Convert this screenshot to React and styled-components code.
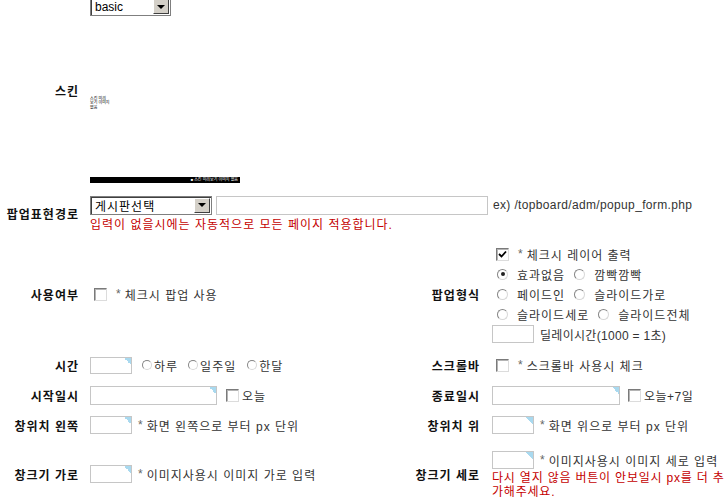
import React from 'react'
import styled, { createGlobalStyle } from 'styled-components'

const GlobalStyle = createGlobalStyle`
  body {
    margin: 0;
    background: #fff;
  }
  * {
    box-sizing: border-box;
  }
`

const Page = styled.div`
  width: 728px;
  margin-top: -3px;
  font-family: "Liberation Sans", "Noto Sans CJK KR", sans-serif;
  font-size: 12px;
  color: #333;
  overflow: hidden;
`

const Row = styled.div`
  display: grid;
  grid-template-columns: ${p => (p.$full ? '80px 1fr' : '80px 322px 80px 246px')};
  align-items: center;
  padding: ${p => p.$pad || '0'};
  min-height: ${p => (p.$h ? `${p.$h}px` : 'auto')};
`

const Label = styled.div`
  text-align: right;
  padding-right: ${p => p.$pr || 0}px;
  font-weight: bold;
  letter-spacing: 1px;
  color: #111;
  white-space: nowrap;
`

const Cell = styled.div`
  padding-left: 10px;
  display: flex;
  flex-direction: column;
  align-items: flex-start;
`

const Line = styled.div`
  display: flex;
  align-items: center;
  height: ${p => p.$h || 20}px;
  white-space: nowrap;
`

const Select = styled.div`
  display: flex;
  align-items: center;
  justify-content: space-between;
  width: ${p => p.$w}px;
  height: 19px;
  border: 1px solid #7f7f7f;
  box-shadow: inset 1px 1px 0 #404040;
  background: #fff;
  color: #000;
  padding-left: 4px;
  letter-spacing: ${p => p.$ls || 0}px;
`

const Arrow = styled.span`
  display: flex;
  align-items: center;
  justify-content: center;
  width: 16px;
  height: 15px;
  margin: 1px;
  background: #d4d0c8;
  border: 1px solid;
  border-color: #fff #404040 #404040 #fff;

  &::after {
    content: '';
    border-left: 4px solid transparent;
    border-right: 4px solid transparent;
    border-top: 4px solid #000;
  }
`

const Field = styled.input`
  width: ${p => p.$w}px;
  height: ${p => p.$h || 18}px;
  margin: 0 ${p => p.$mr ?? 6}px 0 0;
  border: 1px solid #c6c6c6;
  background: #fff linear-gradient(to bottom left, #a9d9ef 50%, transparent 50%) no-repeat top right / 7px 7px;
  padding: 0 2px;
  font: inherit;
  outline: none;
`

const PlainField = styled(Field)`
  background: #fff;
`

const Check = styled.span`
  display: inline-flex;
  align-items: center;
  justify-content: center;
  flex: none;
  width: 13px;
  height: 13px;
  margin: 0 ${p => p.$mr ?? 9}px 0 ${p => p.$ml ?? 4}px;
  border: 1px solid;
  border-color: #7a7a7a #dcdcdc #dcdcdc #7a7a7a;
  box-shadow: inset 1px 1px 0 #b4b4b4;
  background: #fff;
`

const Radio = styled.span`
  display: inline-flex;
  align-items: center;
  justify-content: center;
  flex: none;
  width: ${p => p.$size || 11}px;
  height: ${p => p.$size || 11}px;
  margin: 0 ${p => p.$mr ?? 9}px 0 ${p => p.$ml ?? 5}px;
  border-radius: 50%;
  border: 1px solid;
  border-color: #858585 #d8d8d8 #d8d8d8 #858585;
  background: #fff;

  &::after {
    content: '';
    display: ${p => (p.$on ? 'block' : 'none')};
    width: 4px;
    height: 4px;
    border-radius: 50%;
    background: #222;
  }
`

const Star = styled.span`
  color: #666;
  margin-right: 4px;
`

const Note = styled.span`
  color: #333;
  letter-spacing: ${p => p.$ls ?? 1}px;
`

const Red = styled.div`
  color: #c40000;
  margin-top: ${p => p.$mt || 0}px;
  line-height: ${p => p.$lh || 14}px;
  letter-spacing: ${p => p.$ls ?? 1}px;
  white-space: nowrap;
`

const Tiny = styled.div`
  margin-top: 81px;
  font-size: 4px;
  line-height: 4.4px;
  color: #000;
`

const Bar = styled.div`
  margin-top: 67px;
  width: 150px;
  height: 6px;
  background: #000;
  color: #fff;
  font-size: 4px;
  line-height: 6px;
  text-align: right;
  padding-right: 2px;
  white-space: nowrap;
`

const Gap = styled.span`
  display: inline-block;
  width: ${p => p.$w}px;
`

const Tick = () => (
  <svg width="9" height="9" viewBox="0 0 9 9">
    <path d="M1 4 L3.5 6.5 L8 1.5" fill="none" stroke="#000" strokeWidth="1.8" />
  </svg>
)

const RadioItem = ({ on, children, size, ml, mr, after = 4 }) => (
  <>
    <Radio $on={on} $size={size} $ml={ml} $mr={mr} />
    <Note>{children}</Note>
    <Gap $w={after} />
  </>
)

export default function App() {
  return (
    <Page>
      <GlobalStyle />

      <Row $full $pad="0 0 6px">
        <Label $pr={1}>스킨</Label>
        <Cell>
          <Select $w={81}>
            basic
            <Arrow />
          </Select>
          <Tiny>
            스킨 미리<br />
            보기 이미지<br />
            없음
          </Tiny>
          <Bar>■ 스킨 미리보기 이미지 없음</Bar>
        </Cell>
      </Row>

      <Row $full $pad="6px 0 5px">
        <Label $pr={1}>팝업표현경로</Label>
        <Cell>
          <Line $h={20}>
            <Select $w={122} $ls={1}>
              게시판선택
              <Arrow />
            </Select>
            <Gap $w={4} />
            <PlainField $w={272} $h={19} $mr={5} />
            <Note $ls={0.35}>ex) /topboard/adm/popup_form.php</Note>
          </Line>
          <Red $mt={3}>입력이 없을시에는 자동적으로 모든 페이지 적용합니다.</Red>
        </Cell>
      </Row>

      <Row $pad="7px 0 6px">
        <Label $pr={1}>사용여부</Label>
        <Cell>
          <Line>
            <Check />
            <Star>*</Star>
            <Note>체크시 팝업 사용</Note>
          </Line>
        </Cell>
        <Label $pr={2}>팝업형식</Label>
        <Cell>
          <Line>
            <Check>
              <Tick />
            </Check>
            <Star>*</Star>
            <Note>체크시 레이어 출력</Note>
          </Line>
          <Line>
            <RadioItem on>효과없음</RadioItem>
            <RadioItem>깜빡깜빡</RadioItem>
          </Line>
          <Line>
            <RadioItem>페이드인</RadioItem>
            <RadioItem>슬라이드가로</RadioItem>
          </Line>
          <Line>
            <RadioItem>슬라이드세로</RadioItem>
            <RadioItem>슬라이드전체</RadioItem>
          </Line>
          <Line>
            <PlainField $w={42} $h={18} />
            <Note $ls={0.3}>딜레이시간(1000 = 1초)</Note>
          </Line>
        </Cell>
      </Row>

      <Row $h={30}>
        <Label $pr={1}>시간</Label>
        <Cell>
          <Line>
            <Field $w={42} $h={17} $mr={0} />
            <RadioItem size={10} ml={10} mr={2} after={10}>하루</RadioItem>
            <RadioItem size={10} ml={0} mr={2} after={11}>일주일</RadioItem>
            <RadioItem size={10} ml={0} mr={2} after={0}>한달</RadioItem>
          </Line>
        </Cell>
        <Label $pr={2}>스크롤바</Label>
        <Cell>
          <Line>
            <Check />
            <Star>*</Star>
            <Note>스크롤바 사용시 체크</Note>
          </Line>
        </Cell>
      </Row>

      <Row $h={30}>
        <Label $pr={1}>시작일시</Label>
        <Cell>
          <Line>
            <Field $w={127} $h={19} $mr={0} />
            <Check $ml={9} $mr={3} />
            <Note>오늘</Note>
          </Line>
        </Cell>
        <Label $pr={2}>종료일시</Label>
        <Cell>
          <Line>
            <Field $w={128} $h={19} $mr={0} />
            <Check $ml={8} $mr={3} />
            <Note $ls={0.5}>오늘+7일</Note>
          </Line>
        </Cell>
      </Row>

      <Row $h={30}>
        <Label $pr={1}>창위치 왼쪽</Label>
        <Cell>
          <Line>
            <Field $w={42} $h={18} />
            <Star>*</Star>
            <Note>화면 왼쪽으로 부터 px 단위</Note>
          </Line>
        </Cell>
        <Label $pr={2}>창위치 위</Label>
        <Cell>
          <Line>
            <Field $w={42} $h={18} />
            <Star>*</Star>
            <Note>화면 위으로 부터 px 단위</Note>
          </Line>
        </Cell>
      </Row>

      <Row $pad="9px 0 0">
        <Label $pr={1}>창크기 가로</Label>
        <Cell>
          <Line>
            <Field $w={42} $h={18} />
            <Star>*</Star>
            <Note>이미지사용시 이미지 가로 입력</Note>
          </Line>
        </Cell>
        <Label $pr={2}>창크기 세로</Label>
        <Cell>
          <Line $h={22}>
            <Field $w={42} $h={18} />
            <Star>*</Star>
            <Note>이미지사용시 이미지 세로 입력</Note>
          </Line>
          <Red $ls={0.8}>
            다시 열지 않음 버튼이 안보일시 px를 더 추<br />
            가해주세요.
          </Red>
        </Cell>
      </Row>
    </Page>
  )
}
